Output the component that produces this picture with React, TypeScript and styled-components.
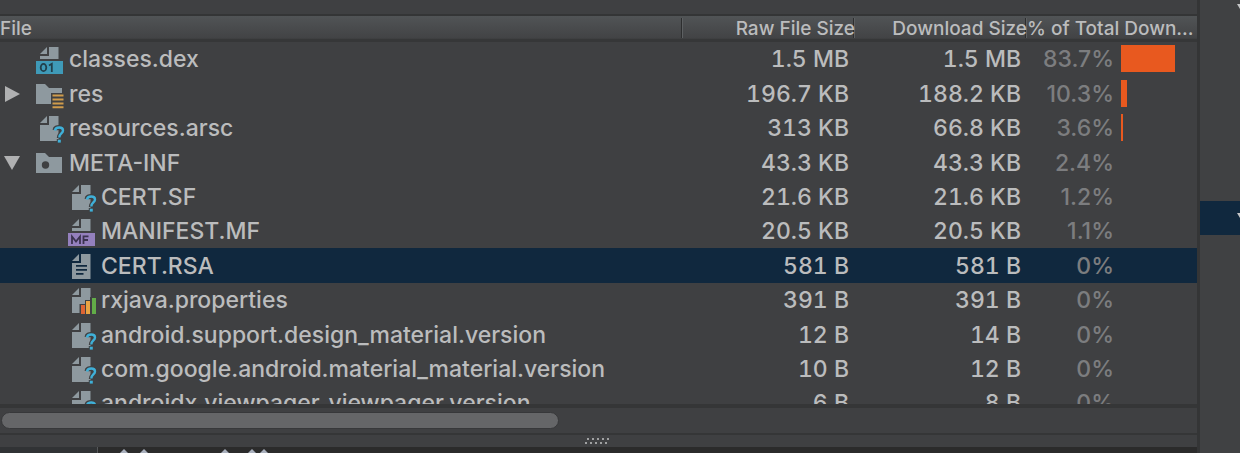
import React from "react";
import styled, { createGlobalStyle, css } from "styled-components";

const GlobalStyle = createGlobalStyle`
  * { box-sizing: border-box; }
  body { margin: 0; background: #3f4042; overflow: hidden; }
`;

const Window = styled.div`
  display: flex;
  height: 100vh;
  overflow: hidden;
  background: #3f4042;
  color: #bbbcbd;
  font-family: Inter, "Liberation Sans", sans-serif;
  font-size: 23px;
  font-weight: 500;
  line-height: 28px;
`;

const MainPane = styled.main`
  flex: 1;
  min-width: 0;
  display: flex;
  flex-direction: column;
  border-right: 3px solid #343536;
`;

const TopStrip = styled.div`
  flex: none;
  height: 16px;
  border-bottom: 2px solid #343536;
`;

const TreeArea = styled.section`
  flex: 1;
  min-height: 0;
  overflow: hidden;
`;

const FileTable = styled.table`
  width: 100%;
  table-layout: fixed;
  border-collapse: collapse;
`;

const FileCol = styled.col``;
const SizeCol = styled.col`width: 172px;`;
const TotalCol = styled.col`width: 170px;`;

const HeaderRow = styled.tr`
  height: 26px;
  background: linear-gradient(#515456, #424345 85%, #363738 90%);
`;

const HeaderCell = styled.th<{ $align?: "left" | "right"; $divided?: boolean }>`
  padding: 0;
  height: 26px;
  font-size: 19px;
  font-weight: 500;
  line-height: 26px;
  text-align: ${(p) => p.$align ?? "right"};
  white-space: nowrap;
  ${(p) =>
    p.$divided &&
    css`
      background: linear-gradient(90deg, #2d2e2f 50%, #5d6062 50%) right 0 top 2px / 2px 20px no-repeat;
    `}
`;

const FileRow = styled.tr<{ $selected?: boolean }>`
  height: 34px;
  background: ${(p) => (p.$selected ? "#10283e" : "transparent")};
  &:nth-child(5n + 2),
  &:nth-child(5n + 4) {
    height: 35px;
  }
`;

const Cell = styled.td`
  padding: 0;
  white-space: nowrap;
`;

const NumberCell = styled(Cell)`
  padding-right: 6px;
  text-align: right;
  font-variant-numeric: tabular-nums;
`;

const NameLine = styled.div<{ $depth: number }>`
  display: flex;
  align-items: center;
  padding-left: ${(p) => p.$depth * 32}px;
`;

const Toggle = styled.button`
  display: flex;
  align-items: center;
  width: 36px;
  height: 28px;
  padding: 0 0 0 4px;
  border: 0;
  background: none;
`;

const ToggleSpace = styled.span`
  width: 36px;
`;

const IconBox = styled.span`
  display: flex;
  width: 33px;
`;

const TotalLine = styled.div`
  display: flex;
  align-items: flex-start;
  gap: 7px;
`;

const Percent = styled.span`
  width: 87px;
  text-align: right;
  color: #7c7d7f;
`;

const Bar = styled.span`
  height: 27px;
  background: #e8591f;
`;

const ScrollTrack = styled.div`
  flex: none;
  display: grid;
  grid-template-columns: 7fr 8fr;
  height: 31px;
  padding: 4px 1px;
  border-top: 4px solid #353637;
  border-bottom: 2px solid #353637;
`;

const ScrollThumb = styled.div`
  height: 17px;
  border: 1px solid #37383a;
  border-radius: 9px;
  background: #656668;
`;

const Splitter = styled.div`
  flex: none;
  display: flex;
  justify-content: center;
  align-items: center;
  height: 12px;
`;

const EditorStrip = styled.div`
  flex: none;
  display: flex;
  height: 6px;
  background: #2b2b2b;
`;

const Gutter = styled.div`
  width: 98px;
  border-right: 1px solid #555759;
  background: #313335;
`;

const SidePane = styled.aside`
  display: flex;
  flex-direction: column;
  width: 40px;
  background: #404143;
`;

const SideItem = styled.div<{ $selected?: boolean }>`
  display: flex;
  justify-content: flex-end;
  align-items: center;
  height: 34px;
  padding-bottom: 4px;
  background: ${(p) => (p.$selected ? "#10283e" : "transparent")};
`;

const SideTop = styled.div`
  display: flex;
  justify-content: flex-end;
  height: 201px;
  padding-top: 4px;
`;

type Kind = "dex" | "res" | "unknown" | "folder" | "manifest" | "text" | "properties";

const Sheet = ({ short }: { short?: boolean }) => (
  <g fill="#8e999f">
    <path d="M4 8 L11 1 V8 Z" />
    <path d={short ? "M13 1 H22.500 V13 H4 V10 H13 Z" : "M13 1 H22.500 V26 H4 V10 H13 Z"} />
  </g>
);

const FileIcon = ({ kind, selected }: { kind: Kind; selected?: boolean }) => (
  <svg width="30" height="32" viewBox="0 -3 30 32" aria-hidden="true">
    {kind === "dex" && (
      <>
        <Sheet short />
        <rect y="15" width="27" height="13" fill="#3f9ab8" />
        <g fill="none" stroke="#22404c" strokeWidth="1.8">
          <ellipse cx="7.5" cy="21.5" rx="2.8" ry="3.6" />
          <path d="M13 19.5 L15.8 17.8 V26" />
        </g>
      </>
    )}
    {kind === "manifest" && (
      <>
        <Sheet short />
        <rect y="15" width="27" height="13" fill="#9480bd" />
        <g fill="none" stroke="#3b3350" strokeWidth="1.8">
          <path d="M4 26 V18.500 L8 23.500 L12 18.500 V26" />
          <path d="M15.500 26 V18.300 H20.500 M15.500 22 H20" />
        </g>
      </>
    )}
    {kind === "res" && (
      <>
        <path d="M0 3 H9 L13 7 H26 V12 H15 V23 H0 Z" fill="#8e999f" />
        <path d="M16.500 14.500 H27.500 M16.500 18.500 H27.500 M16.500 22.500 H27.500 M16.500 26.200 H27.500" stroke="#d09b4b" strokeWidth="2" />
      </>
    )}
    {kind === "folder" && (
      <>
        <path d="M0 3 H9 L13 7 H26 V23 H0 Z" fill="#8e999f" />
        <circle cx="9.500" cy="15" r="3.700" fill="#3f4042" />
      </>
    )}
    {kind === "unknown" && (
      <>
        <Sheet />
        <g fill="none">
          <path d="M19 15 C19.500 11.500 27 11.500 27 15.500 C27 18.500 23.300 18.500 23.300 23 M23.300 24 V28" stroke="#3f4042" strokeWidth="5" />
          <path d="M19 15.500 C19.500 11.500 27 11.500 27 15.500 C27 18.500 23.300 18.500 23.300 22.500" stroke="#3fb0d8" strokeWidth="2.400" />
          <path d="M23.300 24.700 V27.600" stroke="#3fb0d8" strokeWidth="3" />
        </g>
      </>
    )}
    {kind === "text" && (
      <>
        <Sheet />
        <path d="M8 12.800 H19 M8 16.800 H19 M8 20.800 H15.500" stroke={selected ? "#10283e" : "#3f4042"} strokeWidth="1.700" />
      </>
    )}
    {kind === "properties" && (
      <>
        <Sheet />
        <path d="M11.500 28 V17 H17 V13 H22 V10 H28 V28 Z" fill="#3f4042" />
        <rect x="13" y="18" width="4" height="9" fill="#dd6534" />
        <rect x="18" y="14" width="4" height="13" fill="#e9a443" />
        <rect x="24" y="11" width="4" height="16" fill="#62ad48" />
      </>
    )}
  </svg>
);

type Entry = {
  name: string;
  kind: Kind;
  depth: 0 | 1;
  raw: string;
  download: string;
  percent: string;
  bar?: number;
  open?: boolean;
  selected?: boolean;
};

const entries: Entry[] = [
  { name: "classes.dex", kind: "dex", depth: 0, raw: "1.5 MB", download: "1.5 MB", percent: "83.7%", bar: 54 },
  { name: "res", kind: "res", depth: 0, raw: "196.7 KB", download: "188.2 KB", percent: "10.3%", bar: 6, open: false },
  { name: "resources.arsc", kind: "unknown", depth: 0, raw: "313 KB", download: "66.8 KB", percent: "3.6%", bar: 2 },
  { name: "META-INF", kind: "folder", depth: 0, raw: "43.3 KB", download: "43.3 KB", percent: "2.4%", open: true },
  { name: "CERT.SF", kind: "unknown", depth: 1, raw: "21.6 KB", download: "21.6 KB", percent: "1.2%" },
  { name: "MANIFEST.MF", kind: "manifest", depth: 1, raw: "20.5 KB", download: "20.5 KB", percent: "1.1%" },
  { name: "CERT.RSA", kind: "text", depth: 1, raw: "581 B", download: "581 B", percent: "0%", selected: true },
  { name: "rxjava.properties", kind: "properties", depth: 1, raw: "391 B", download: "391 B", percent: "0%" },
  { name: "android.support.design_material.version", kind: "unknown", depth: 1, raw: "12 B", download: "14 B", percent: "0%" },
  { name: "com.google.android.material_material.version", kind: "unknown", depth: 1, raw: "10 B", download: "12 B", percent: "0%" },
  { name: "androidx.viewpager_viewpager.version", kind: "unknown", depth: 1, raw: "6 B", download: "8 B", percent: "0%" },
];

const SideArrow = () => (
  <svg width="3" height="6" viewBox="0 0 3 6" aria-hidden="true">
    <path d="M0 0 H3 V5 Z" fill="#c5c6c7" />
  </svg>
);

export default function App() {
  return (
    <Window>
      <GlobalStyle />
      <MainPane>
        <TopStrip />
        <TreeArea>
          <FileTable>
            <colgroup>
              <FileCol />
              <SizeCol />
              <SizeCol />
              <TotalCol />
            </colgroup>
            <thead>
              <HeaderRow>
                <HeaderCell $align="left" $divided>File</HeaderCell>
                <HeaderCell $divided>Raw File Size</HeaderCell>
                <HeaderCell $divided>Download Size</HeaderCell>
                <HeaderCell $align="left">% of Total Down...</HeaderCell>
              </HeaderRow>
            </thead>
            <tbody>
              {entries.map((e) => (
                <FileRow key={e.name} $selected={e.selected}>
                  <Cell>
                    <NameLine $depth={e.depth}>
                      {e.open === undefined ? (
                        <ToggleSpace />
                      ) : (
                        <Toggle aria-label={`Toggle ${e.name}`} aria-expanded={e.open}>
                          <svg width="18" height="18" viewBox="0 0 18 18" aria-hidden="true">
                            <path d={e.open ? "M0 2 H16 L8 16 Z" : "M1 1 L16 9 L1 17 Z"} fill="#b0b1b2" />
                          </svg>
                        </Toggle>
                      )}
                      <IconBox>
                        <FileIcon kind={e.kind} selected={e.selected} />
                      </IconBox>
                      {e.name}
                    </NameLine>
                  </Cell>
                  <NumberCell>{e.raw}</NumberCell>
                  <NumberCell>{e.download}</NumberCell>
                  <Cell>
                    <TotalLine>
                      <Percent>{e.percent}</Percent>
                      {e.bar && <Bar style={{ width: e.bar }} />}
                    </TotalLine>
                  </Cell>
                </FileRow>
              ))}
            </tbody>
          </FileTable>
        </TreeArea>
        <ScrollTrack>
          <ScrollThumb />
        </ScrollTrack>
        <Splitter>
          <svg width="28" height="8" viewBox="0 0 28 8" aria-hidden="true">
            {[0, 1, 2, 3, 4].map((i) => (
              <g key={i}>
                <rect x={2 + i * 5} y="1" width="2" height="2" fill="#a0a1a2" />
                <rect x={i * 5} y="5" width="2" height="2" fill="#a0a1a2" />
              </g>
            ))}
          </svg>
        </Splitter>
        <EditorStrip>
          <Gutter />
          <svg width="180" height="6" viewBox="98 0 180 6" aria-hidden="true">
            {[124, 144, 225, 252, 264].map((x) => (
              <path key={x} d={`M${x - 4} 6 L${x} 2 L${x + 4} 6 Z`} fill="#a9b0bd" />
            ))}
          </svg>
        </EditorStrip>
      </MainPane>
      <SidePane>
        <SideTop>
          <SideArrow />
        </SideTop>
        <SideItem $selected>
          <SideArrow />
        </SideItem>
      </SidePane>
    </Window>
  );
}
